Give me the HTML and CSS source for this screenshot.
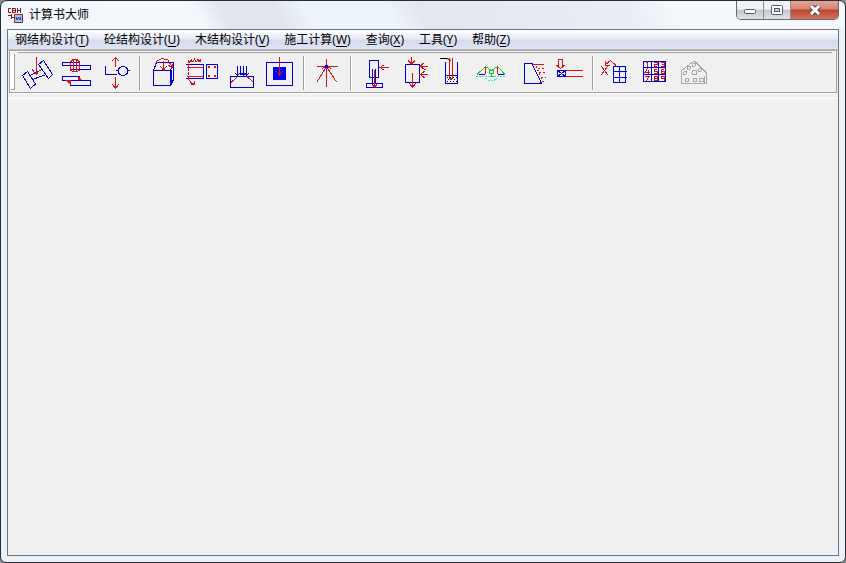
FILE: index.html
```html
<!DOCTYPE html>
<html lang="zh-CN">
<head>
<meta charset="utf-8">
<title>计算书大师</title>
<link rel="stylesheet" href="styles.css">
</head>
<body>
<div class="window">
  <header class="titlebar">
    <svg class="app-icon" viewBox="0 0 16 16" aria-hidden="true">
      <path class="maroon" d="M4 1.500H1.500V5.500H4M5.500 1V6M5 1.500H8.500V5.500H5M5.500 3.500H8.500M10.500 1V6M13.500 1V6M10.500 3.500H13.500"/>
      <path class="maroon" d="M1 8.500H5M4.500 7V12M4 10.500H8"/>
      <rect x="7.500" y="7.500" width="8" height="8" fill="#a8c4ee" stroke="#843040"/>
      <path d="M9 10L10 13L11.500 10L13 13L14 10" fill="none" stroke="#1746a8"/>
    </svg>
    <h1 class="title">计算书大师</h1>
    <div class="controls">
      <button class="control" aria-label="最小化"><svg viewBox="0 0 14 10"><rect x="1.500" y="4.500" width="11" height="4" rx="1" fill="#fff" stroke="#555868"/></svg></button>
      <button class="control" aria-label="最大化"><svg viewBox="0 0 14 10"><rect x="1.500" y="0.500" width="11" height="9" rx="1" fill="#fff" stroke="#555868"/><rect x="4.500" y="3.500" width="5" height="3" fill="#ccd0d8" stroke="#555868"/></svg></button>
      <button class="control close" aria-label="关闭"><svg viewBox="0 0 14 10"><path d="M3 1L11 9M11 1L3 9" stroke="#57454e" stroke-width="5"/><path d="M3 1L11 9M11 1L3 9" stroke="#fff" stroke-width="3"/></svg></button>
    </div>
  </header>
  <main class="client">
    <nav class="menubar">
      <button class="menu">钢结构设计(<u>T</u>)</button>
      <button class="menu">砼结构设计(<u>U</u>)</button>
      <button class="menu">木结构设计(<u>V</u>)</button>
      <button class="menu">施工计算(<u>W</u>)</button>
      <button class="menu">查询(<u>X</u>)</button>
      <button class="menu">工具(<u>Y</u>)</button>
      <button class="menu">帮助(<u>Z</u>)</button>
    </nav>
    <div class="coolbar">
      <span class="gripper"></span>
      <div class="toolbar" role="toolbar">
        <button class="tool" aria-label="钢梁"><svg viewBox="18 55 39 36"><path class="b" d="M22.500 75.500L27.500 71.500L35.500 84L30.500 88.500ZM38.500 64.500L43.500 60.500L52.500 74.500L48.500 78.500ZM30 75.500L41 70M32.500 79.500L44.500 75"/><path class="r" d="M36.500 57V74M32 69.500L36.500 74.500L39.500 70"/></svg></button>
        <button class="tool" aria-label="螺栓连接"><svg viewBox="57 55 39 36"><path class="b" d="M62.500 62.500H79.500V65.500H62.500ZM70.500 65.500H90.500V69.500H70.500ZM62.500 76.500H79.500V80.500H62.500ZM70.500 80.500H90.500V85.500H70.500Z"/><path class="r" d="M70.500 70V62L73 59.500H77L79.500 62V70L77 71.500H73ZM73.500 60V71M76.500 60V71"/><path class="rf" d="M65 80H71V85ZM78 76L82 80H78Z"/></svg></button>
        <button class="tool" aria-label="角钢"><svg viewBox="96 55 39 36"><path class="b" d="M105.500 66V74.500H117M116 70.500H118M128 70.500H130"/><ellipse class="b" cx="123" cy="71" rx="5" ry="4.500"/><path class="r" d="M115.500 57V67M112 61L115.500 57.500L119 61M115.500 77V89M112 84L115.500 88.500L119 84"/></svg></button>
        <span class="separator"></span>
        <button class="tool" aria-label="混凝土构件"><svg viewBox="143 55 39 36"><path class="b" d="M153.500 70.500H170.500V85.500H153.500ZL156.500 62.500H173.500L170.500 70.500M171.500 70V85M173.500 62.500V79.500L170.500 85.500"/><path class="r" d="M155 65L157 61L162 58.500L168 60L172 67M163.500 61V70M160 66L163.500 70L167 66M168.500 65.500L172 67.500L173 64"/></svg></button>
        <button class="tool" aria-label="配筋"><svg viewBox="182 55 39 36"><path class="b" d="M186 64.500H203.500V78.500H186M206.500 64.500H217.500V78.500H206.500Z"/><path class="r" d="M187 67.500H203M187 76.500H203"/><path class="r" stroke-dasharray="3 1" d="M188.500 60V79"/><path class="r" d="M188 79L192 83.500L195 84.500M189 62.500L192 59.500M189 61.500H193L194.500 59L196 62L198 59.500L199 62L200.500 59V62M191 84.500H194.500V81"/><path class="rf" d="M208 66h2v2h-2ZM214 66h2v2h-2ZM208 75h2v2h-2ZM214 75h2v2h-2Z"/></svg></button>
        <button class="tool" aria-label="基础"><svg viewBox="221 55 39 36"><path class="b" d="M230.500 76.500H253.500V87.500H230.500ZM237.500 66V75M240.500 66V75M243.500 66V75M246.500 66V75M235 73L237.500 75.500L240.500 72.500L243.500 75.500L246.500 72.500M240.500 75.500L243.500 72.500L246.500 75.500L249 73"/><path class="r" d="M231 82.500L237.500 76.500M247 76.500L253 82"/></svg></button>
        <button class="tool" aria-label="冲切"><svg viewBox="260 55 39 36"><rect class="b" x="266.500" y="62.500" width="26" height="23"/><rect x="273" y="67" width="13" height="13" fill="#0000f0"/><path class="r" d="M279.500 57V75M276 71L279.500 75L283 71"/></svg></button>
        <span class="separator"></span>
        <button class="tool" aria-label="木结构"><svg viewBox="307 55 39 36"><path class="r" d="M326.500 59V87M317 66.500H338M326.500 66.500L317 82M326.500 66.500L336.500 82M322 68.500L326.500 66L331 68.500"/><rect x="325" y="65" width="3" height="3" fill="#0000f0"/></svg></button>
        <span class="separator"></span>
        <button class="tool" aria-label="立柱"><svg viewBox="354 55 39 36"><path class="b" d="M369.500 60.500H378.500V77.500H369.500ZM372.500 68.500V83.500M375.500 68.500V83.500M366.500 83.500H382.500V87.500H366.500Z"/><path class="r" d="M374.500 70V87M372 84L374.500 87.500L377 84M380 67.500H389M383.500 65L380 67.500L383.500 70"/></svg></button>
        <button class="tool" aria-label="模板"><svg viewBox="393 55 39 36"><rect class="b" x="405.500" y="64.500" width="14" height="18"/><path class="r" d="M411.500 57V64M408 60.500L411.500 64L415 60.500M420 66.500H428M423.500 63L420 66.500L426 70M420 74.500H428M425 71L420 74.500L425 78M412.500 73V87M409 83L412.500 87.500L416 83"/></svg></button>
        <button class="tool" aria-label="降水"><svg viewBox="432 55 39 36"><path class="b" d="M445.500 62V83.500H457.500V62M446 75.500H457"/><path d="M440 58.500H447L451 60.500" fill="none" stroke="#000"/><path d="M447 77.500H457M447 81.500H457" fill="none" stroke="#000" stroke-dasharray="1 2"/><path d="M448 79.500H457" fill="none" stroke="#000" stroke-dasharray="1 2"/><path class="r" d="M449.500 58V79M452.500 58V79M449 76L451 80L453 76"/></svg></button>
        <button class="tool" aria-label="吊装"><svg viewBox="471 55 39 36"><path class="g" d="M477 74.500L485.500 66.500L491.500 70.500L497.500 66.500L505 74.500M489.500 70.500H493.500V73.500H489.500ZM491.500 73V76M489.500 76.500H493.500"/><path class="r" d="M485.500 67V74M497.500 67V74"/><path class="b" d="M479 74.500H485M498 74.500H504"/><path class="c" d="M476 76.500H489M494 76.500H506M486 78L489 80.500H494L497 78"/></svg></button>
        <button class="tool" aria-label="边坡"><svg viewBox="510 55 39 36"><path class="b" d="M524.500 63.500H532L541.500 83.500H524.500Z"/><path class="r" d="M533 64.500H544"/><path class="r" stroke-dasharray="2 2" d="M536 66L543.500 83M538 68.500H545M539 72.500H545M541 77.500H546M542 81.500H546"/></svg></button>
        <button class="tool" aria-label="支撑"><svg viewBox="549 55 39 36"><path class="b" d="M557.500 70.500H565.500V76.500H557.500ZM558 71L565 76M558 76L565 71"/><path class="r" d="M566 70.500H583M566 76.500H583M558.500 59.500H562.500V65.500H564.500L560.500 68.500L556.500 65.500H558.500Z"/></svg></button>
        <span class="separator"></span>
        <button class="tool" aria-label="截面查询"><svg viewBox="596 55 39 36"><path class="b" d="M613.500 66.500H625.500V82.500H613.500ZM619.500 66V83M613 71.500H627M613 77.500H627"/><path class="r" d="M601 66L608 75M608 66L601 75M605 65L610.500 60.500L616 65.500M605.500 61V65.500H610"/></svg></button>
        <button class="tool" aria-label="数表查询"><svg viewBox="635 55 39 36"><path class="b" d="M643.500 61.500H665.500V81.500H643.500ZM651.500 61V82M658.500 61V82M643 67.500H666M643 74.500H666"/><path class="r" d="M646 63L647.500 61.500V67M654 62.500H657V64.500H654V66.500H657M661 62.500H664.500V66.500H661M662 64.500H664M647.500 68L645 72.500H650M648.500 70V74M657 69.500H654V71.500H657V73.500H654M664 69.500H661V73.500H664V71.500H661M645 76.500H649L646.500 81M654 76.500H657V80.500H654ZM654 78.500H657M661 78.500H664V76.500H661ZM664.500 76V81"/></svg></button>
        <button class="tool" aria-label="孔板" disabled><svg viewBox="674 55 39 36"><g class="gray"><path d="M681.500 83.500V70.500L693.500 61.500H695L706.500 73V83.500Z"/><circle cx="687" cy="80" r="2"/><circle cx="695" cy="80" r="2"/><circle cx="701.500" cy="80" r="2"/><circle cx="694.500" cy="72.500" r="2.500"/><circle cx="685" cy="73" r="1.500"/><circle cx="689" cy="68" r="1.500"/><circle cx="694" cy="65" r="1.500"/><circle cx="700" cy="70" r="1.500"/><path d="M704.500 76V83"/></g></svg></button>
      </div>
    </div>
    <section class="workspace"></section>
  </main>
</div>
</body>
</html>
```
FILE: styles.css
```css
* { box-sizing: border-box; }

body {
  margin: 0;
  background: #8a8d8e;
  color: #000;
  font: 12px/18px "Noto Sans", "Noto Sans CJK SC", sans-serif;
}

button {
  margin: 0;
  padding: 0;
  border: 0;
  background: none;
  color: inherit;
  font: inherit;
}

svg { display: block; }

.window {
  display: flex;
  flex-direction: column;
  min-height: 100vh;
  padding: 0 6px 6px;
  border: 1px solid #292b33;
  border-radius: 7px 7px 6px 6px;
  background:
    linear-gradient(60deg, #f2f7fc 0 24%, #e1e6ed 27% 33%, #eef4fb 37% 46%, #e3e8f0 50%, #e9eef5 74%, #f5f8fc 80%) 0 0 / 100% 28px no-repeat,
    #e9f1f9;
}

.titlebar {
  display: flex;
  align-items: flex-start;
  height: 28px;
}

.app-icon {
  width: 16px;
  height: 16px;
  margin-top: 6px;
}

.maroon { fill: none; stroke: #96101c; }

.title {
  flex: 1;
  margin: 5px 0 0 6px;
  font-size: 12px;
  font-weight: 400;
}

.controls {
  display: flex;
  height: 19px;
  border: 1px solid #666a76;
  border-top: 0;
  border-radius: 0 0 5px 5px;
  overflow: hidden;
}

.control {
  display: grid;
  place-items: center;
  width: 27px;
  border-right: 1px solid #8a8d98;
  background: linear-gradient(#eff1f4 0 45%, #c3c7cd 50%, #dfe3e8);
}

.control svg { width: 14px; height: 10px; }

.close {
  width: 47px;
  border-right: 0;
  background: linear-gradient(#e5a697, #d68473 45%, #bd4430 50%, #d4745a);
}

.client {
  flex: 1;
  display: flex;
  flex-direction: column;
  border: 1px solid #70757d;
  background: #f0f0f0;
}

.menubar {
  display: flex;
  height: 20px;
  border-bottom: 1px solid #b8bac4;
  background: linear-gradient(#fff, #e7ebf6 45%, #d5dbee 55%, #dfe4f3);
}

.menu { padding: 0 8px 0 7px; white-space: nowrap; }

.menu u { text-underline-offset: 2px; }

.coolbar {
  display: flex;
  align-items: center;
  height: 43px;
  margin: 0 1px;
  padding-right: 4px;
  border: 1px solid #a0a0a0;
  box-shadow: 0 1px #fff, inset 1px 1px #fff;
}

.gripper {
  width: 4px;
  height: 36px;
  margin-left: 1px;
  border: solid #a0a0a0;
  border-width: 0 1px 1px 0;
  background: #fff;
}

.toolbar {
  flex: 1;
  display: flex;
  align-items: center;
  align-self: stretch;
  margin-top: 1px;
  padding-left: 0;
  margin-left: 3px;
  border-top: 1px solid #a0a0a0;
}

.tool { width: 39px; height: 36px; }

.tool svg { width: 39px; height: 36px; }

.separator {
  width: 8px;
  height: 34px;
  background:
    linear-gradient(#a0a0a0, #a0a0a0) 4px 0 / 1px 100% no-repeat,
    linear-gradient(#fff, #fff) 5px 0 / 1px 100% no-repeat;
}

.workspace {
  flex: 1;
  margin-top: 5px;
  border-top: 1px solid #fff;
}

.b, .r, .g, .c, .gray { fill: none; shape-rendering: crispEdges; }
.b { stroke: #0000d0; }
.r { stroke: #e01018; }
.g { stroke: #20c830; }
.c { stroke: #40e0e8; stroke-dasharray: 2 1; }
.gray { stroke: #a8a8a8; }
.rf { fill: #e01018; }
```
